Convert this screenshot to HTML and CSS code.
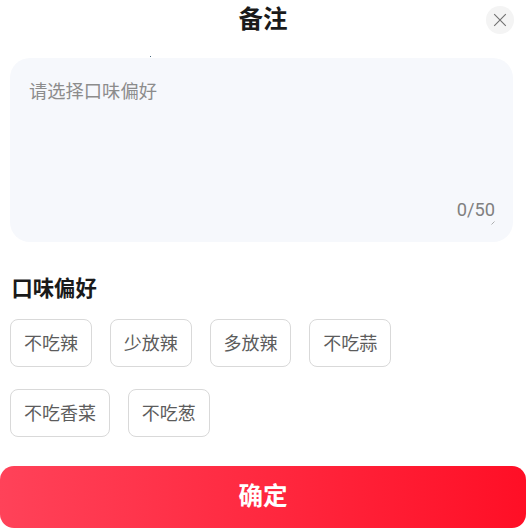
FILE: index.html
```html
<!DOCTYPE html>
<html lang="zh-CN">
<head>
<meta charset="utf-8">
<title>备注</title>
<link rel="stylesheet" href="styles.css">
</head>
<body>
<div class="sheet">
  <header class="head">
    <h1 class="title">备注</h1>
    <button class="close" aria-label="关闭">
      <svg width="14" height="14" viewBox="0 0 14 14"><path d="M1.2 1.2 12.8 12.8M12.8 1.2 1.2 12.8" stroke="#707070" stroke-width="1.1" fill="none"/></svg>
    </button>
  </header>
  <section class="note">
    <i class="dot"></i>
    <div class="placeholder">请选择口味偏好</div>
    <div class="count">0/50</div>
    <svg class="grip" width="4" height="4" viewBox="0 0 4 4"><path d="M0.5 3.5 3.5 0.5" stroke="#9a9a9a" stroke-width="0.8" fill="none"/></svg>
  </section>
  <h2 class="sub">口味偏好</h2>
  <div class="tags">
    <span class="tag">不吃辣</span>
    <span class="tag">少放辣</span>
    <span class="tag">多放辣</span>
    <span class="tag">不吃蒜</span>
    <span class="tag">不吃香菜</span>
    <span class="tag">不吃葱</span>
  </div>
  <button class="ok">确定</button>
</div>
</body>
</html>
```
FILE: styles.css
```css
* { box-sizing: border-box; }
html, body { margin: 0; padding: 0; background: #fff; }
body { font-family: "Noto Sans CJK SC", "Noto Sans", sans-serif; }
.sheet { width: 530px; height: 532px; display: flex; flex-direction: column; padding: 0 4px 0 0; }
.head { height: 58px; position: relative; display: flex; justify-content: center; flex: none; }
.title { margin: 0; font-size: 24.5px; line-height: 36px; font-weight: 700; color: #1a1a1a; }
.close { position: absolute; right: 12px; top: 6px; width: 28px; height: 28px; border: 0; border-radius: 50%; background: #f4f4f4; display: flex; align-items: center; justify-content: center; padding: 0; }
.note { position: relative; margin: 0 13px 0 10px; height: 184px; flex: none; border-radius: 20px; background: #f6f8fc; padding: 18px 18px 18px 19px; display: flex; flex-direction: column; justify-content: space-between; }
.dot { position: absolute; left: 140px; top: -2px; width: 1px; height: 1px; background: #4a6a80; }
.grip { position: absolute; right: 18px; bottom: 17px; }
.placeholder { font-size: 18.3px; line-height: 28px; color: #8c8c8c; }
.count { font-size: 18.3px; line-height: 28px; color: #808080; text-align: right; font-family: "Roboto", sans-serif; }
.sub { margin: 29px 0 0 11.5px; font-size: 21.3px; line-height: 32px; font-weight: 700; color: #1a1a1a; flex: none; }
.tags { margin: 16px 0 0 10px; display: flex; flex-wrap: wrap; gap: 22px 18px; width: 420px; flex: none; }
.tag { height: 48px; padding: 0 12.9px; border: 1px solid #d9d9d9; border-radius: 8px; font-size: 18px; line-height: 44px; color: #5c5c5c; }
.ok { margin: 29px 0 0 0; height: 62px; width: 526px; flex: none; border: 0; border-radius: 14px; padding: 0 0 5px; background: linear-gradient(90deg, #ff4259, #ff0f26); color: #fff; font-family: inherit; font-size: 24.5px; font-weight: 700; }
```
